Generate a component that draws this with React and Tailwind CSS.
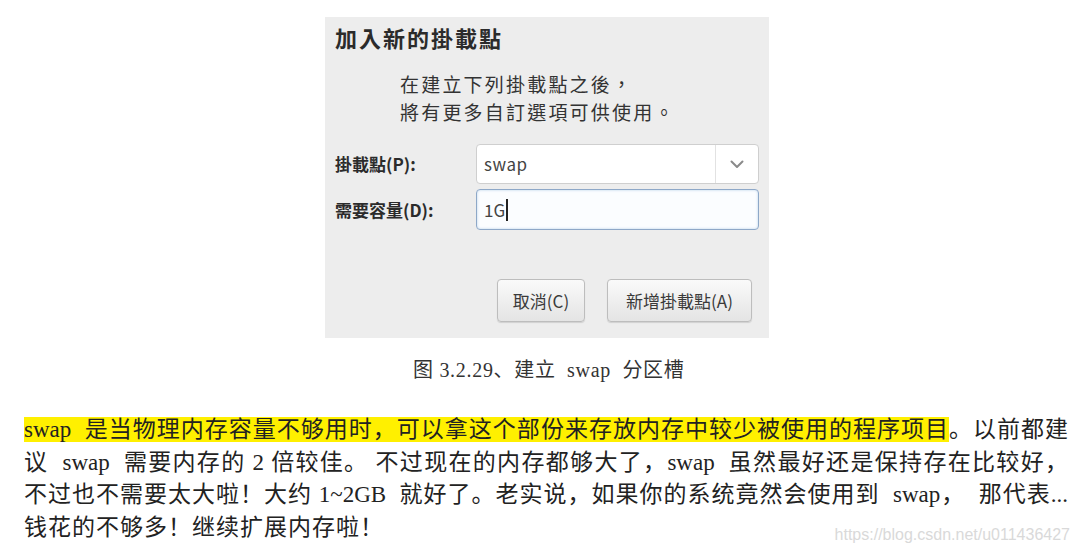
import React from "react";

const sans = { fontFamily: '"Noto Sans CJK TC", "Noto Sans", sans-serif' };
const serif = { fontFamily: '"Liberation Serif", "Noto Sans CJK SC", serif' };

function Chevron() {
  return (
    <svg width="14" height="9" viewBox="0 0 14 9" fill="none">
      <path d="M1.5 1.5 L7 7 L12.5 1.5" stroke="#8a8a8a" strokeWidth="2" strokeLinecap="round" strokeLinejoin="round" />
    </svg>
  );
}

export default function App() {
  return (
    <div className="relative w-[1080px] h-[552px] bg-white overflow-hidden">
      <div className="pl-[325px] pt-[17px]">
        <div className="w-[444px] h-[321px] bg-[#ededed] flex flex-col" style={sans}>
          <div className="pl-[10px] pt-[4px] text-[22px] leading-[32px] font-bold tracking-[2px] text-[#2b2b2b]">
            加入新的掛載點
          </div>
          <div className="pl-[75px] pt-[17px] text-[19px] leading-[27.5px] text-[#333] tracking-[2.2px]">
            <div>在建立下列掛載點之後，</div>
            <div>將有更多自訂選項可供使用。</div>
          </div>
          <div className="pl-[10px] pt-[19px] flex flex-col gap-[5px]">
            <div className="flex items-center">
              <div className="w-[141px] text-[17px] font-bold text-[#2b2b2b]">掛載點(P):</div>
              <div className="w-[283px] h-[40px] bg-white border border-[#cfcfcf] rounded-[4px] flex items-center">
                <div className="flex-1 pl-[7px] text-[17px] text-[#444] tracking-[0.5px]">swap</div>
                <div className="w-[43px] h-full border-l border-[#e2e2e2] flex items-center justify-center">
                  <Chevron />
                </div>
              </div>
            </div>
            <div className="flex items-center">
              <div className="w-[141px] text-[17px] font-bold text-[#2b2b2b]">需要容量(D):</div>
              <div className="w-[283px] h-[41px] bg-[#fbfdff] border border-[#8ea8c8] rounded-[4px] shadow-[inset_0_0_2px_1px_#dbe8f5] flex items-center pl-[7px]">
                <span className="text-[17px] text-[#444]">1G</span>
                <span className="w-[1.5px] h-[22px] bg-[#222] ml-[1px]" />
              </div>
            </div>
          </div>
          <div className="mt-auto pb-[16px] pr-[17px] flex justify-end gap-[22px]">
            <div className="w-[88px] h-[43px] rounded-[4px] border border-[#bdbdbd] bg-gradient-to-b from-[#fafafa] to-[#e4e4e4] shadow-[0_1px_1px_#d0d0d0] flex items-center justify-center text-[17px] text-[#3a3a3a]">
              取消(C)
            </div>
            <div className="w-[145px] h-[43px] rounded-[4px] border border-[#bdbdbd] bg-gradient-to-b from-[#fafafa] to-[#e4e4e4] shadow-[0_1px_1px_#d0d0d0] flex items-center justify-center text-[17px] text-[#3a3a3a]">
              新增掛載點(A)
            </div>
          </div>
        </div>
      </div>

      <div className="pt-[18px] pl-[413px] text-[20px] leading-[28px] text-[#333] whitespace-pre tracking-[0.7px]" style={serif}>
        {"图 3.2.29、建立  swap  分区槽"}
      </div>

      <div className="pl-[24px] pr-[12px] pt-[30px] text-[23px] leading-[32.5px] text-[#222]" style={serif}>
        <div className="text-justify [text-align-last:justify]">
          <span className="bg-[#fff000]">swap&nbsp; 是当物理内存容量不够用时，可以拿这个部份来存放内存中较少被使用的程序项目</span>。以前都建
        </div>
        <div className="text-justify [text-align-last:justify]">
          议&nbsp; swap&nbsp; 需要内存的 2 倍较佳。 不过现在的内存都够大了，swap&nbsp; 虽然最好还是保持存在比较好，
        </div>
        <div className="text-justify [text-align-last:justify]">
          不过也不需要太大啦！大约 1~2GB&nbsp; 就好了。老实说，如果你的系统竟然会使用到&nbsp; swap，&nbsp; 那代表...
        </div>
        <div className="tracking-[1px]">钱花的不够多！继续扩展内存啦！</div>
      </div>

      <div
        className="absolute right-[10px] bottom-[7px] text-[16px] leading-[20px] text-[#d9d9d9]"
        style={{ fontFamily: '"Liberation Sans", Arial, sans-serif' }}
      >
        https://blog.csdn.net/u011436427
      </div>
    </div>
  );
}
